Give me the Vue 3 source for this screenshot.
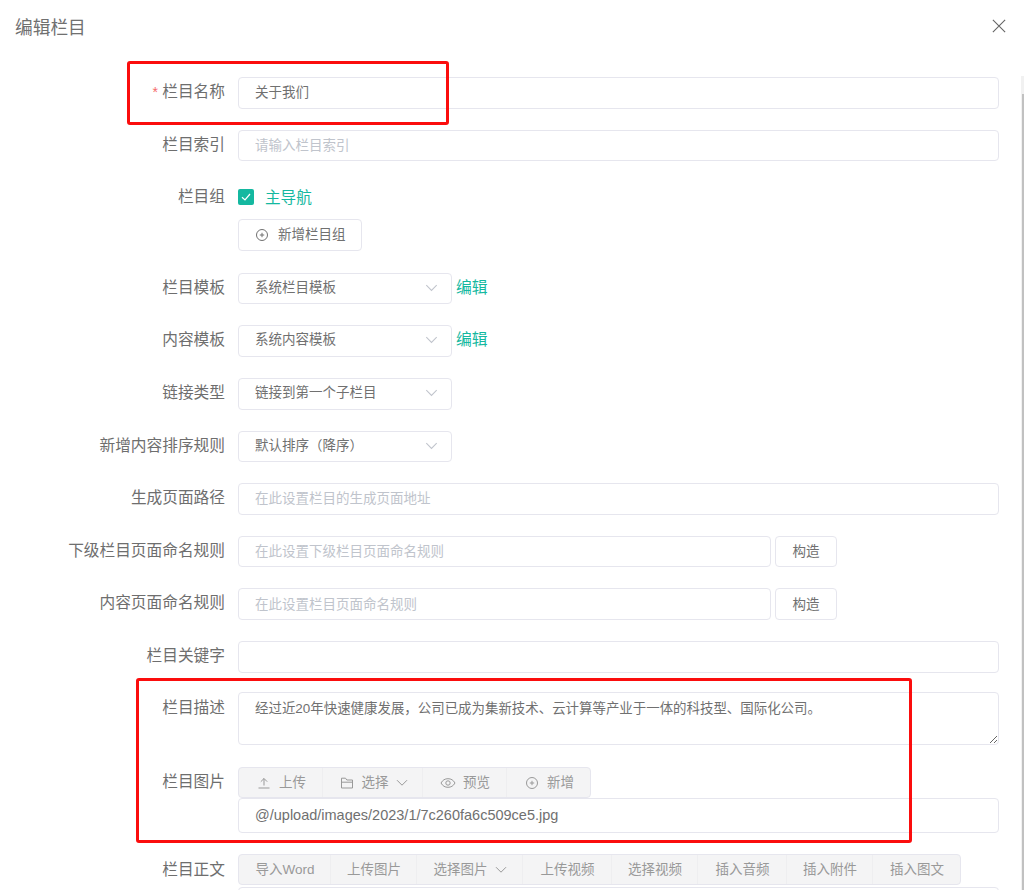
<script setup>
const imageTools = [
  { text: '上传', icon: 'upload', width: 84 },
  { text: '选择', icon: 'folder', width: 100, caret: true },
  { text: '预览', icon: 'eye', width: 84 },
  { text: '新增', icon: 'plus', width: 83 }
]
const bodyTools = [
  { text: '导入Word', width: 92 },
  { text: '上传图片', width: 86 },
  { text: '选择图片', width: 106, caret: true },
  { text: '上传视频', width: 89 },
  { text: '选择视频', width: 86 },
  { text: '插入音频', width: 89 },
  { text: '插入附件', width: 86 },
  { text: '插入图文', width: 87 }
]
</script>

<template>
  <div class="dialog">
    <header class="head">
      <h1 class="title">编辑栏目</h1>
      <svg class="close" viewBox="0 0 16 16" aria-label="关闭">
        <path d="M1 1 15 15M15 1 1 15" />
      </svg>
    </header>

    <form class="form" @submit.prevent>
      <div class="row">
        <label class="label"><i class="req">*</i> 栏目名称</label>
        <input class="field filled" value="关于我们" />
      </div>
      <div class="row">
        <label class="label">栏目索引</label>
        <input class="field" placeholder="请输入栏目索引" />
      </div>
      <div class="row group">
        <label class="label">栏目组</label>
        <div class="stack">
          <div class="check">
            <span class="box">
              <svg viewBox="0 0 16 16"><path d="M4 8.200 7 11l5-6" /></svg>
            </span>
            <span class="check-text">主导航</span>
          </div>
          <button type="button" class="btn add">
            <svg class="ico" viewBox="0 0 16 16"><circle cx="8" cy="8" r="5.500" /><path d="M8 5.800v4.400M5.800 8h4.400" /></svg>
            新增栏目组
          </button>
        </div>
      </div>
      <div class="row">
        <label class="label">栏目模板</label>
        <div class="select">系统栏目模板<svg class="arrow" viewBox="0 0 16 10"><path d="M1.500 1.500 8 8l6.500-6.500" /></svg></div>
        <a class="link">编辑</a>
      </div>
      <div class="row">
        <label class="label">内容模板</label>
        <div class="select">系统内容模板<svg class="arrow" viewBox="0 0 16 10"><path d="M1.500 1.500 8 8l6.500-6.500" /></svg></div>
        <a class="link">编辑</a>
      </div>
      <div class="row">
        <label class="label">链接类型</label>
        <div class="select">链接到第一个子栏目<svg class="arrow" viewBox="0 0 16 10"><path d="M1.500 1.500 8 8l6.500-6.500" /></svg></div>
      </div>
      <div class="row">
        <label class="label">新增内容排序规则</label>
        <div class="select">默认排序（降序）<svg class="arrow" viewBox="0 0 16 10"><path d="M1.500 1.500 8 8l6.500-6.500" /></svg></div>
      </div>
      <div class="row">
        <label class="label">生成页面路径</label>
        <input class="field" placeholder="在此设置栏目的生成页面地址" />
      </div>
      <div class="row">
        <label class="label">下级栏目页面命名规则</label>
        <input class="field short" placeholder="在此设置下级栏目页面命名规则" />
        <button type="button" class="btn build">构造</button>
      </div>
      <div class="row">
        <label class="label">内容页面命名规则</label>
        <input class="field short" placeholder="在此设置栏目页面命名规则" />
        <button type="button" class="btn build">构造</button>
      </div>
      <div class="row keyword">
        <label class="label">栏目关键字</label>
        <input class="field" />
      </div>
      <div class="row tall">
        <label class="label">栏目描述</label>
        <textarea class="area" spellcheck="false">经过近20年快速健康发展，公司已成为集新技术、云计算等产业于一体的科技型、国际化公司。</textarea>
      </div>
      <div class="row media">
        <label class="label">栏目图片</label>
        <div class="stack">
          <div class="bar">
            <span v-for="t in imageTools" :key="t.text" class="tool" :style="{ width: t.width + 'px' }">
              <svg v-if="t.icon === 'upload'" class="ico gap" viewBox="0 0 16 16"><path d="M2.500 13h11M8 10.500V3.500M4.800 6.700 8 3.500l3.200 3.200" /></svg>
              <svg v-if="t.icon === 'folder'" class="ico gap" viewBox="0 0 16 16"><path d="M2.500 13V3.200h4l1.300 1.800h5.700V13zM2.500 7.200h11" /></svg>
              <svg v-if="t.icon === 'eye'" class="ico gap" viewBox="0 0 16 16"><path d="M1 8c1.700-3 4-4.300 7-4.300S13.300 5 15 8c-1.700 3-4 4.300-7 4.300S2.700 11 1 8z" /><circle cx="8" cy="8" r="2.200" /></svg>
              <svg v-if="t.icon === 'plus'" class="ico gap" viewBox="0 0 16 16"><circle cx="8" cy="8" r="5.500" /><path d="M8 5.800v4.400M5.800 8h4.400" /></svg>
              {{ t.text }}
              <svg v-if="t.caret" class="caret" viewBox="0 0 12 8"><path d="M1 1.200 6 6.200l5-5" /></svg>
            </span>
          </div>
          <input class="field path filled" value="@/upload/images/2023/1/7c260fa6c509ce5.jpg" />
        </div>
      </div>
      <div class="row media">
        <label class="label body-label">栏目正文</label>
        <div class="stack">
          <div class="bar">
            <span v-for="t in bodyTools" :key="t.text" class="tool" :style="{ width: t.width + 'px' }">
              {{ t.text }}
              <svg v-if="t.caret" class="caret" viewBox="0 0 12 8"><path d="M1 1.200 6 6.200l5-5" /></svg>
            </span>
          </div>
          <div class="editor"></div>
        </div>
      </div>
    </form>

    <div class="track"><div class="thumb"></div></div>
    <div class="mark mark-a"></div>
    <div class="mark mark-b"></div>
  </div>
</template>

<style scoped>
.dialog {
  position: relative;
  width: 1024px;
  height: 890px;
  overflow: hidden;
  background: #fff;
  color: #666;
  font-family: "Liberation Sans", "Noto Sans CJK SC", sans-serif;
}
.head {
  display: flex;
  align-items: center;
  justify-content: space-between;
  height: 54px;
  padding: 0 18px 0 15px;
}
.title {
  margin: 0 0 2px;
  font-size: 17.700px;
  font-weight: 400;
  color: #707070;
}
.close {
  width: 14px;
  height: 14px;
  margin-top: -2px;
  fill: none;
  stroke: #666;
  stroke-width: 1.300;
}
.form {
  padding-top: 23px;
}
.row {
  display: flex;
  align-items: flex-start;
  height: 31.600px;
  margin-bottom: 21px;
}
.row.group {
  height: 69.600px;
}
.row.keyword {
  margin-bottom: 19.400px;
}
.row.tall {
  height: 53px;
  margin-bottom: 22px;
}
.row.media {
  height: 66px;
  margin-bottom: 21px;
}
.label {
  flex: none;
  width: 225px;
  text-align: right;
  font-size: 15.700px;
  line-height: 29px;
  margin-right: 13px;
  color: #6e6e6e;
  white-space: nowrap;
}
.row.tall .label {
  line-height: 32px;
}
.body-label {
  line-height: 31px;
}
.req {
  font-style: normal;
  color: #f56c6c;
  font-size: 14px;
}
.field {
  box-sizing: border-box;
  width: 761px;
  height: 31.600px;
  padding: 0 16px;
  border: 1px solid #e6e6ee;
  border-radius: 4px;
  outline: none;
  font: inherit;
  font-size: 13.500px;
  color: #707070;
  background: #fff;
}
.field.filled {
  padding-bottom: 3px;
}
.field::placeholder {
  color: #c0c4cc;
  opacity: 1;
}
.field.short {
  width: 533px;
}
.field.path {
  height: 35px;
  padding-bottom: 1px;
  font-size: 14.500px;
}
.area {
  box-sizing: border-box;
  width: 761px;
  height: 53px;
  padding: 6px 16px;
  border: 1px solid #e6e6ee;
  border-radius: 4px;
  outline: none;
  resize: vertical;
  font: inherit;
  font-size: 13.450px;
  line-height: 20px;
  color: #707070;
}
.stack {
  display: flex;
  flex-direction: column;
  align-items: flex-start;
}
.check {
  display: flex;
  align-items: center;
  height: 29px;
  margin-bottom: 8px;
}
.box {
  display: flex;
  width: 16px;
  height: 16px;
  border-radius: 2px;
  background: #14b8a0;
}
.box svg {
  width: 16px;
  height: 16px;
  fill: none;
  stroke: #fff;
  stroke-width: 1.200;
}
.check-text {
  margin-left: 11px;
  padding-bottom: 2px;
  font-size: 15.600px;
  color: #14b8a0;
}
.btn {
  box-sizing: border-box;
  height: 31.600px;
  border: 1px solid #e6e6ee;
  border-radius: 4px;
  background: #fff;
  font: inherit;
  font-size: 13.500px;
  color: #707070;
  padding: 0 0 3px;
}
.btn.add {
  display: flex;
  align-items: center;
  width: 124px;
  padding-left: 15px;
}
.btn.add .ico {
  margin: 3px 8px 0 0;
}
.btn.build {
  width: 62px;
  margin-left: 4px;
}
.ico {
  width: 16px;
  height: 16px;
  flex: none;
  fill: none;
  stroke: currentColor;
  stroke-width: 1;
}
.ico.gap {
  margin: 3px 7px 0 0;
}
.select {
  position: relative;
  box-sizing: border-box;
  width: 214px;
  height: 31.600px;
  padding-left: 16px;
  border: 1px solid #e6e6ee;
  border-radius: 4px;
  font-size: 13.500px;
  line-height: 27px;
  color: #707070;
}
.arrow {
  position: absolute;
  right: 13px;
  top: 10px;
  width: 13px;
  height: 8px;
  fill: none;
  stroke: #c0c4cc;
  stroke-width: 1.300;
}
.link {
  margin-left: 4px;
  font-size: 15.800px;
  line-height: 29px;
  color: #14b8a0;
}
.bar {
  display: flex;
  height: 31px;
  box-sizing: border-box;
  border: 1px solid #e6e6ee;
  border-radius: 4px;
  background: #f4f4f5;
}
.tool {
  display: flex;
  align-items: center;
  justify-content: center;
  box-sizing: border-box;
  padding: 0 0 2px 1px;
  border-right: 1px solid #eeeef0;
  font-size: 13.500px;
  color: #999;
  white-space: nowrap;
}
.tool:last-child {
  border-right: 0;
}
.caret {
  width: 12px;
  height: 8px;
  margin: 3px 0 0 7px;
  fill: none;
  stroke: #999;
  stroke-width: 1;
}
.editor {
  width: 761px;
  height: 40px;
  margin-top: 2px;
  box-sizing: border-box;
  border: 1px solid #e6e6ee;
  border-radius: 4px;
}
.track {
  position: absolute;
  right: 0;
  top: 76px;
  bottom: 0;
  width: 3px;
  background: #f1f1f1;
}
.thumb {
  position: absolute;
  left: 1px;
  right: 0;
  top: 18px;
  bottom: 0;
  background: #c1c1c1;
}
.mark {
  position: absolute;
  box-sizing: border-box;
  border: 3px solid #fb0d0d;
  border-radius: 3px;
}
.mark-a {
  left: 127px;
  top: 61px;
  width: 322px;
  height: 64px;
}
.mark-b {
  left: 136px;
  top: 678px;
  width: 776px;
  height: 165px;
}
</style>
